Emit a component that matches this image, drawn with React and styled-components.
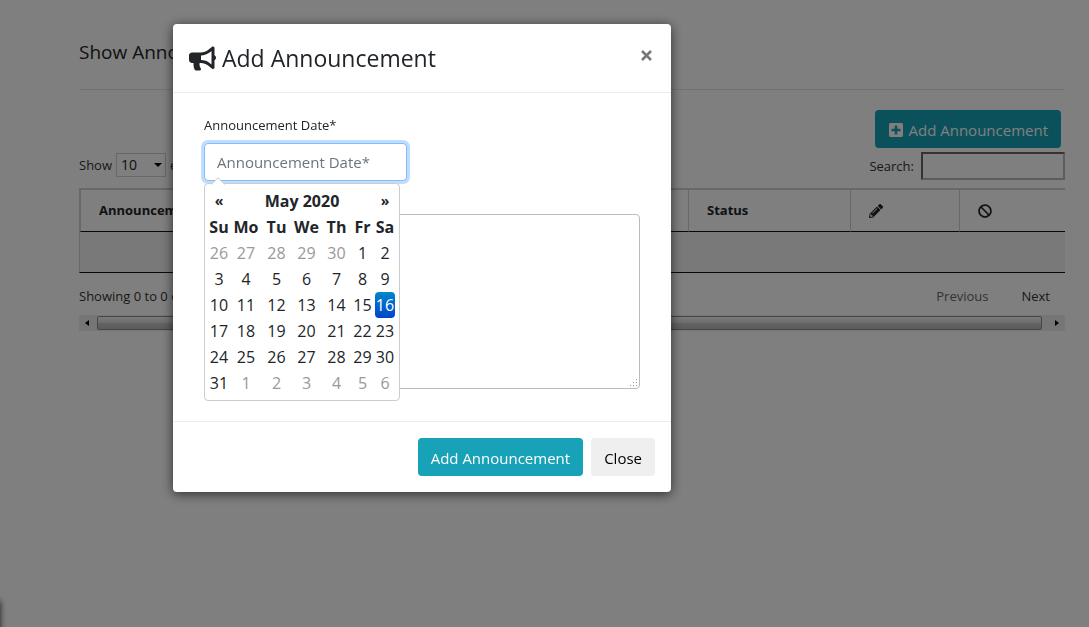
import React from "react";
import styled, { createGlobalStyle } from "styled-components";
import { FaBan, FaBullhorn, FaPencilAlt, FaPlusSquare } from "react-icons/fa";

const GlobalStyle = createGlobalStyle`
  *, *::before, *::after {
    box-sizing: border-box;
  }
  body {
    margin: 0;
    background: #fff;
    color: #212529;
    font: 400 15px/24px "Open Sans", "Noto Sans", sans-serif;
    overflow: hidden;
  }
  button, input, select, textarea {
    font: inherit;
    color: inherit;
    margin: 0;
  }
`;

const Page = styled.main`
  min-height: 100vh;
  padding: 39px 24px 0 79px;
`;

const PageTitle = styled.h5`
  margin: 0;
  padding-bottom: 24px;
  border-bottom: 1px solid #e5e5e5;
  font-size: 19px;
  line-height: 26px;
  font-weight: 400;
`;

const Actions = styled.div`
  display: flex;
  justify-content: flex-end;
  padding: 20px 4px 4px 0;
`;

const Button = styled.button`
  display: inline-flex;
  align-items: center;
  gap: 4px;
  height: 38px;
  padding: 2px 13px 0;
  border: 0;
  border-radius: 4px;
  white-space: nowrap;
  background: ${(props) => (props.$light ? "#efefef" : "#17a2b8")};
  color: ${(props) => (props.$light ? "#000" : "#fff")};
`;

const TableTools = styled.div`
  display: flex;
  justify-content: space-between;
  height: 36px;
  font-size: 13px;
  line-height: 24px;
  color: #333;
`;

const Length = styled.label`
  display: flex;
  gap: 4px;
  height: 26px;
  align-items: center;
`;

const SelectBox = styled.span`
  display: flex;
  align-items: center;
  width: 50px;
  height: 24px;
  border: 1px solid #d0d0d0;

  select {
    appearance: none;
    width: 37px;
    padding: 0 0 0 4px;
    border: 0;
    outline: 0;
    background: transparent;
    font-size: 14px;
    line-height: 20px;
    color: #222;
  }
`;

const Search = styled.label`
  display: flex;
  align-items: center;
  gap: 7px;
  height: 28px;

  input {
    width: 144px;
    height: 28px;
    padding: 2px;
    border: 2px inset #bbb;
    background: #fff;
  }
`;

const TableScroll = styled.div`
  overflow: hidden;
`;

const Table = styled.table`
  width: 1000px;
  table-layout: fixed;
  border-collapse: separate;
  border-spacing: 0;
  border: 1px solid #d0d0d0;
  border-bottom: 1px solid #111;
  font-size: 13px;
  line-height: 21px;

  th {
    height: 43px;
    padding: 0 18px;
    text-align: left;
    font-weight: 700;
    white-space: nowrap;
    border-top: 1px solid #d0d0d0;
    border-bottom: 1px solid #111;
    border-left: 1px solid #d0d0d0;
  }
  th svg {
    display: block;
  }
  td {
    height: 40px;
    background: #f3f3f3;
  }
`;

const TableFooter = styled.div`
  display: flex;
  justify-content: space-between;
  height: 42px;
  padding: 12px 15px 0 0;
  font-size: 13px;
  line-height: 22px;
  color: #333;
`;

const Pager = styled.nav`
  display: flex;
  gap: 33px;

  a {
    color: #333;
    text-decoration: none;
  }
  a:first-child {
    color: #666;
  }
`;

const ScrollBar = styled.div`
  display: flex;
  align-items: center;
  justify-content: space-between;
  height: 16px;
  padding: 0 6px;
  background: #ececec;
`;

const ScrollThumb = styled.div`
  flex: 1;
  height: 14px;
  margin: 0 13px 0 8px;
  border: 1px solid #8c8c8c;
  border-radius: 2px;
  background: linear-gradient(#f4f4f4, #dedede 45%, #c4c4c4 55%, #b8b8b8);
`;

// edge of the side panel that is slid out of view
const SidePanel = styled.div`
  position: fixed;
  left: -20px;
  bottom: -10px;
  width: 20px;
  height: 36px;
  box-shadow: 0 0 6px rgba(0, 0, 0, 0.8);
`;

const Backdrop = styled.div`
  position: fixed;
  inset: 0;
  padding: 24px 24px 24px 173px;
  background: rgba(0, 0, 0, 0.5);
`;

const Modal = styled.section`
  width: 100%;
  max-width: 498px;
  border-radius: 4px;
  background: #fff;
  box-shadow: 0 2px 12px rgba(0, 0, 0, 0.65);
`;

const ModalHeader = styled.header`
  display: flex;
  align-items: flex-start;
  justify-content: space-between;
  padding: 16px;
  border-bottom: 1px solid #e9ecef;
`;

const ModalTitle = styled.h4`
  display: flex;
  align-items: center;
  gap: 6px;
  margin: 0;
  font-size: 23px;
  line-height: 36px;
  font-weight: 400;
`;

const CloseIcon = styled.button`
  display: flex;
  padding: 9px 2px;
  border: 0;
  background: none;
  color: #777;
`;

const ModalBody = styled.form`
  padding: 20px 31px 32px;
`;

const Field = styled.div`
  position: relative;
  display: flex;
  flex-direction: column;
  align-items: flex-start;

  label {
    font-size: 13px;
    line-height: 24px;
    margin-bottom: 6px;
  }
  & + & {
    padding-top: 3px;
  }
`;

const DateInput = styled.input`
  width: 203px;
  height: 38px;
  padding: 0 12px;
  border: 1px solid #80bdff;
  border-radius: 4px;
  outline: 0;
  background: #fff;
  box-shadow: 0 0 0 3px rgba(0, 123, 255, 0.25);

  &::placeholder {
    color: #6c757d;
    opacity: 1;
  }
`;

const TextArea = styled.textarea`
  display: block;
  width: 100%;
  height: 175px;
  padding: 6px 12px;
  border: 1px solid #bbb;
  border-radius: 4px;
  resize: none;
`;

const Grip = styled.svg`
  position: absolute;
  right: 3px;
  bottom: 3px;
  fill: #999;
`;

const Picker = styled.div`
  position: absolute;
  top: 70px;
  left: 0;
  z-index: 1;
  padding: 4px;
  border: 1px solid #ccc;
  border-radius: 4px;
  background: #fff;
`;

const PickerArrow = styled.svg`
  position: absolute;
  top: -7px;
  left: 6px;
`;

const Calendar = styled.table`
  width: 186px;
  table-layout: fixed;
  border-collapse: collapse;
  font-size: 16px;

  th, td {
    height: 26px;
    padding: 0;
    line-height: 26px;
    text-align: center;
    white-space: nowrap;
  }
  th {
    font-weight: 700;
  }
`;

const Arrow = styled.th`
  font-size: 14px;
`;

const MonthName = styled.th`
  font-size: 16px;
`;

const Day = styled.td`
  border-radius: 4px;
  color: ${(props) => (props.$muted ? "#999" : "inherit")};
  ${(props) =>
    props.$active &&
    "background: linear-gradient(#0088cc, #0044cc); color: #fff;"}
`;

const ModalFooter = styled.footer`
  display: flex;
  justify-content: flex-end;
  gap: 8px;
  padding: 16px;
  border-top: 1px solid #e9ecef;
`;

const colWidths = [20, 34, 27, 33, 27, 25, 20];
const weekDays = ["Su", "Mo", "Tu", "We", "Th", "Fr", "Sa"];

// May 2020 starts on a Friday, so five days of April come first
const weeks = Array.from({ length: 6 }, (_, week) =>
  weekDays.map((_, i) => {
    const n = week * 7 + i - 4;
    if (n < 1) return { day: n + 30, muted: true };
    if (n > 31) return { day: n - 31, muted: true };
    return { day: n, active: n === 16 };
  })
);

const DatePicker = () => (
  <Picker>
    <PickerArrow width="14" height="8" viewBox="0 0 14 8">
      <path d="M0 8 7 1l7 7z" fill="#fff" />
      <path d="M0 7.500 7 .8l7 6.700" fill="none" stroke="#ccc" />
    </PickerArrow>
    <Calendar>
      <colgroup>
        {colWidths.map((width, i) => (
          <col key={i} style={{ width }} />
        ))}
      </colgroup>
      <thead>
        <tr>
          <Arrow>«</Arrow>
          <MonthName colSpan="5">May 2020</MonthName>
          <Arrow>»</Arrow>
        </tr>
        <tr>
          {weekDays.map((name) => (
            <th key={name}>{name}</th>
          ))}
        </tr>
      </thead>
      <tbody>
        {weeks.map((week, i) => (
          <tr key={i}>
            {week.map(({ day, muted, active }) => (
              <Day key={day} $muted={muted} $active={active}>
                {day}
              </Day>
            ))}
          </tr>
        ))}
      </tbody>
    </Calendar>
  </Picker>
);

const Announcements = () => (
  <Page>
    <PageTitle>Show Announcements</PageTitle>
    <Actions>
      <Button type="button">
        <FaPlusSquare size={16} />
        Add Announcement
      </Button>
    </Actions>
    <TableTools>
      <Length>
        Show
        <SelectBox>
          <select defaultValue="10">
            <option>10</option>
            <option>25</option>
          </select>
          <svg width="8" height="4" viewBox="0 0 8 4">
            <path d="M0 0h8L4 4z" />
          </svg>
        </SelectBox>
        entries
      </Length>
      <Search>
        Search:
        <input type="search" />
      </Search>
    </TableTools>
    <TableScroll>
      <Table>
        <colgroup>
          <col style={{ width: 230 }} />
          <col />
          <col style={{ width: 162 }} />
          <col style={{ width: 109 }} />
          <col style={{ width: 119 }} />
        </colgroup>
        <thead>
          <tr>
            <th>Announcement Date</th>
            <th>Announcement</th>
            <th>Status</th>
            <th>
              <FaPencilAlt size={14} />
            </th>
            <th>
              <FaBan size={14} />
            </th>
          </tr>
        </thead>
        <tbody>
          <tr>
            <td colSpan="5" />
          </tr>
        </tbody>
      </Table>
    </TableScroll>
    <TableFooter>
      <span>Showing 0 to 0 of 0 entries</span>
      <Pager>
        <a href="#previous">Previous</a>
        <a href="#next">Next</a>
      </Pager>
    </TableFooter>
    <ScrollBar>
      <svg width="4" height="6" viewBox="0 0 4 6">
        <path d="M4 0v6L0 3z" />
      </svg>
      <ScrollThumb />
      <svg width="4" height="6" viewBox="0 0 4 6">
        <path d="M0 0v6l4-3z" />
      </svg>
    </ScrollBar>
    <SidePanel />
  </Page>
);

const AddAnnouncement = () => (
  <Backdrop>
    <Modal role="dialog" aria-labelledby="modal-title">
      <ModalHeader>
        <ModalTitle id="modal-title">
          <FaBullhorn size={27} />
          Add Announcement
        </ModalTitle>
        <CloseIcon type="button" aria-label="Close">
          <svg width="13" height="13" viewBox="0 0 13 13">
            <path
              d="M2 2l9 9M11 2l-9 9"
              stroke="currentColor"
              strokeWidth="2.600"
            />
          </svg>
        </CloseIcon>
      </ModalHeader>
      <ModalBody>
        <Field>
          <label htmlFor="date">Announcement Date*</label>
          <DateInput id="date" placeholder="Announcement Date*" />
          <DatePicker />
        </Field>
        <Field>
          <label htmlFor="text">Announcement*</label>
          <TextArea id="text" />
          <Grip width="8" height="8" viewBox="0 0 8 8">
            <path d="M7 1h1v1H7zM4 4h1v1H4zM7 4h1v1H7zM1 7h1v1H1zM4 7h1v1H4zM7 7h1v1H7z" />
          </Grip>
        </Field>
      </ModalBody>
      <ModalFooter>
        <Button type="button">Add Announcement</Button>
        <Button type="button" $light>
          Close
        </Button>
      </ModalFooter>
    </Modal>
  </Backdrop>
);

const App = () => (
  <>
    <GlobalStyle />
    <Announcements />
    <AddAnnouncement />
  </>
);

export default App;
